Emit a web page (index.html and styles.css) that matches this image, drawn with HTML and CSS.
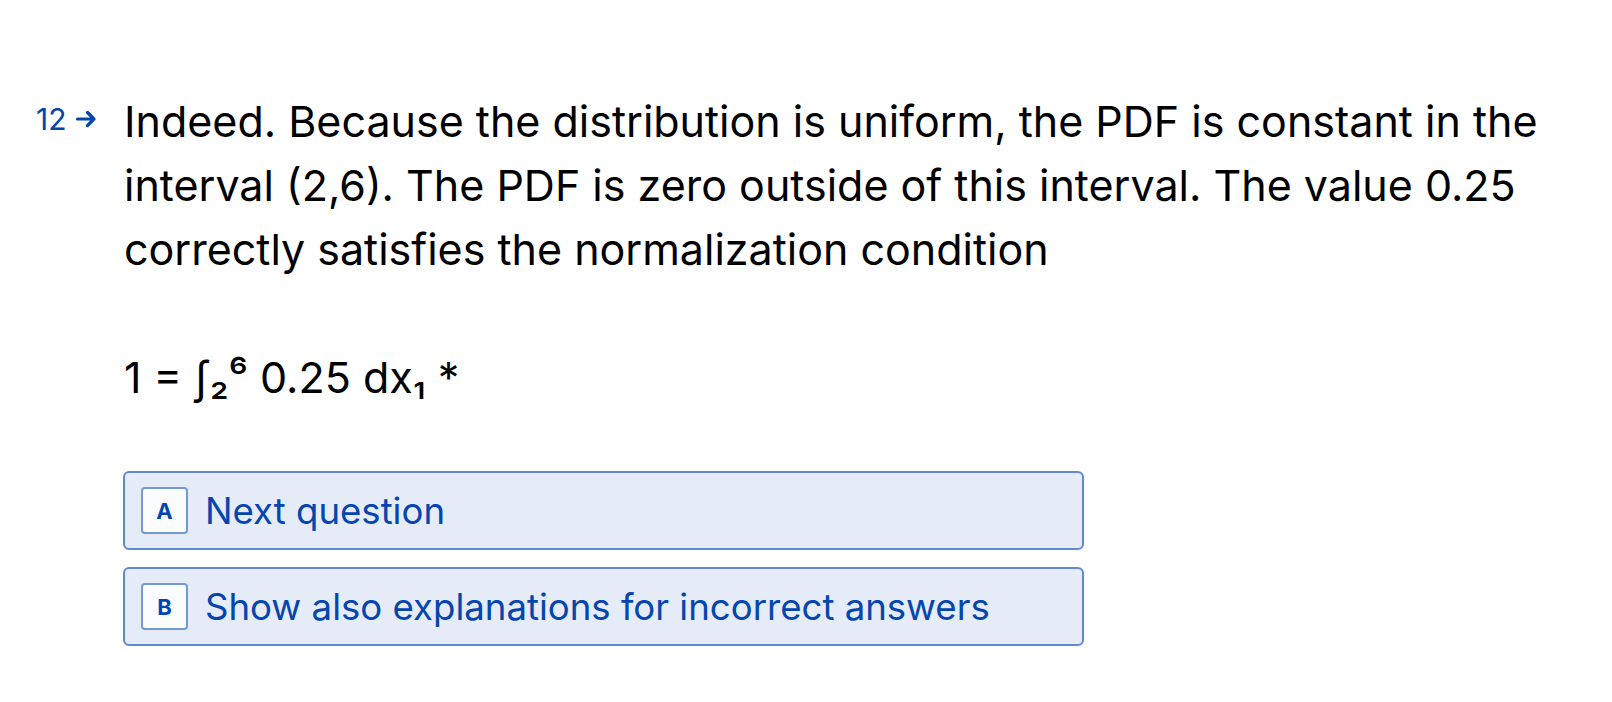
FILE: index.html
```html
<!DOCTYPE html>
<html lang="en">
<head>
<meta charset="utf-8">
<title>Question 12</title>
<link rel="stylesheet" href="styles.css">
</head>
<body>
<main class="page">
  <section class="question">
    <div class="counter">
      <span class="num">12</span>
      <svg class="arrow" width="22" height="18" viewBox="0 0 22 18" aria-hidden="true">
        <path d="M2.5 9H19M12.5 2.5L19 9L12.5 15.5" fill="none" stroke="#0445AF" stroke-width="3.2" stroke-linecap="round" stroke-linejoin="round"/>
      </svg>
    </div>
    <div class="content">
      <p class="text">Indeed. Because the distribution is uniform, the PDF is constant in the interval (2,6). The PDF is zero outside of this interval. The value 0.25 correctly satisfies the normalization condition</p>
      <p class="text">1 = ∫₂⁶ 0.25 dx₁ *</p>
      <div class="choices">
        <div class="choice"><span class="key">A</span><span class="label">Next question</span></div>
        <div class="choice"><span class="key">B</span><span class="label">Show also explanations for incorrect answers</span></div>
      </div>
    </div>
  </section>
</main>
</body>
</html>
```
FILE: styles.css
```css
html, body {
  margin: 0;
  padding: 0;
  background: #ffffff;
}
body {
  font-family: Inter, "Noto Sans", "DejaVu Sans", sans-serif;
  color: #000000;
}
.page {
  padding-top: 89px;
  padding-left: 36px;
}
.question {
  display: flex;
  align-items: flex-start;
}
.counter {
  width: 88px;
  flex: none;
  display: flex;
  align-items: center;
  gap: 8px;
  height: 60px;
  color: #0445AF;
  font-size: 30px;
  line-height: 60px;
}
.arrow {
  display: block;
  margin-top: -1px;
}
.content {
  width: 1440px;
}
.text {
  margin: 0 0 64px 0;
  font-size: 43px;
  line-height: 64px;
}
.choices {
  margin-top: -2px;
  width: 961px;
  display: flex;
  flex-direction: column;
  gap: 17px;
  margin-left: -1px;
}
.choice {
  box-sizing: border-box;
  height: 79px;
  display: flex;
  align-items: center;
  padding-left: 16px;
  background: #e5ebf7;
  border: 2px solid #6089cf;
  border-radius: 6px;
  color: #0445AF;
}
.key {
  box-sizing: border-box;
  width: 47px;
  height: 47px;
  flex: none;
  display: flex;
  align-items: center;
  justify-content: center;
  background: #fbfcfe;
  border: 2px solid #7599d5;
  border-radius: 4px;
  font-size: 22px;
  font-weight: 700;
}
.label {
  margin-left: 17px;
  font-size: 36.6px;
  line-height: 44px;
}
```
